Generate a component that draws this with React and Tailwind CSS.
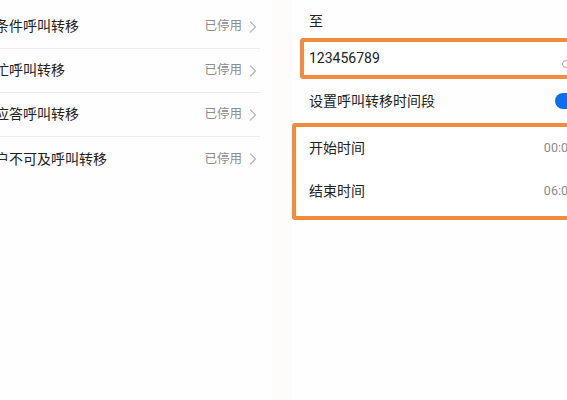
const rows = ['无条件呼叫转移', '遇忙呼叫转移', '无应答呼叫转移', '用户不可及呼叫转移']

function Chevron() {
  return (
    <svg width="8" height="12" viewBox="0 0 8 12" fill="none" stroke="#b5b5b5" strokeWidth="1.2" strokeLinecap="round" strokeLinejoin="round">
      <polyline points="1.5 1 6.5 6 1.5 11" />
    </svg>
  )
}

export default function App() {
  return (
    <div
      className="w-[567px] h-[400px] overflow-hidden flex bg-[#fdfcfb] text-[#222]"
      style={{ fontFamily: 'Roboto, "Noto Sans CJK SC", sans-serif' }}
    >
      {/* left list */}
      <div className="w-[272px] shrink-0 bg-[#fefefe] pt-[5px]">
        {rows.map((r, i) => (
          <div key={r} className={`h-[44px] w-[260px] flex items-center ${i < 3 ? 'border-b border-[#ececec]' : ''}`}>
            <span className="ml-[-19px] flex-1 text-[14px] whitespace-nowrap">{r}</span>
            <span className="text-[12.5px] text-[#8c8c8c]">已停用</span>
            <span className="ml-[7px] mr-[3px] flex items-center"><Chevron /></span>
          </div>
        ))}
      </div>

      {/* right settings */}
      <div className="w-[300px] shrink-0 ml-[20px] bg-[#fefefe]">
        <div className="h-[38px] flex items-center pl-[17px] text-[14px] pt-[4px]">至</div>
        <div className="ml-[8px] h-[41px] border-4 border-[#f28b3d] rounded-[3px] flex items-center pl-[5px] pr-[18px] bg-white">
          <span className="flex-1 text-[14px]">123456789</span>
          <span className="w-[8px] h-[8px] rounded-full border border-[#aaa] mt-[10px]" />
        </div>
        <div className="h-[44px] flex items-center justify-between pl-[17px] pr-[7px]">
          <span className="text-[14px]">设置呼叫转移时间段</span>
          <span className="w-[30px] h-[16px] rounded-full bg-[#0b6ff5] flex items-center justify-end pr-[2px]">
            <span className="w-[12px] h-[12px] rounded-full bg-white" />
          </span>
        </div>
        <div className="border-4 border-[#f28b3d] rounded-[3px] pl-[13px] pr-[13px] bg-white">
          <div className="h-[43px] flex items-center justify-between">
            <span className="text-[14px]">开始时间</span>
            <span className="text-[12.5px] text-[#8c8c8c]">00:00</span>
          </div>
          <div className="h-[43px] flex items-center justify-between">
            <span className="text-[14px]">结束时间</span>
            <span className="text-[12.5px] text-[#8c8c8c]">06:00</span>
          </div>
          <div className="h-[3px]" />
        </div>
      </div>
    </div>
  )
}
